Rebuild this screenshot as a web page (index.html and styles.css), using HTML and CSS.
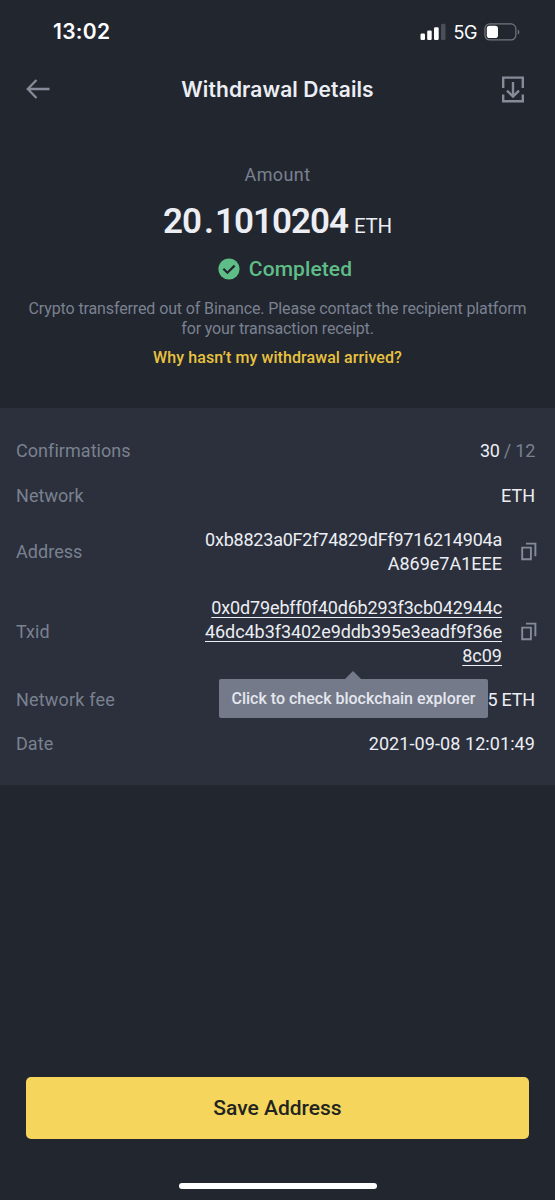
FILE: index.html
```html
<!DOCTYPE html>
<html lang="en">
<head>
<meta charset="utf-8">
<title>Withdrawal Details</title>
<link rel="stylesheet" href="styles.css">
</head>
<body>
<div class="screen">
  <div class="status-bar">
    <span class="time">13:02</span>
    <div class="status-icons">
      <svg class="signal" width="26" height="18" viewBox="0 0 26 18" fill="#fff">
        <rect x="0.5" y="10.5" width="4.5" height="6.5" rx="1.2"/>
        <rect x="7.2" y="7.5" width="4.5" height="9.5" rx="1.2"/>
        <rect x="14" y="4.2" width="4.7" height="12.8" rx="1.2"/>
        <rect x="21" y="0.8" width="4.5" height="16.2" rx="1.2" fill="#4b4f58"/>
      </svg>
      <span class="carrier">5G</span>
      <svg class="battery" width="36" height="18" viewBox="0 0 36 18">
        <rect x="0.9" y="0.9" width="31" height="16" rx="4.8" fill="none" stroke="#72767d" stroke-width="1.2"/>
        <rect x="2.8" y="2.8" width="11.2" height="12.2" rx="2.8" fill="#fff"/>
        <path d="M33.8 6.4c2 .8 2 4.4 0 5.2z" fill="#72767d"/>
      </svg>
    </div>
  </div>

  <header class="nav">
    <svg width="24" height="20" viewBox="0 0 24 20" fill="none" stroke="#858b98" stroke-width="2.3">
      <path d="M10.5 1 1.8 10l8.7 9M2 10h21.5"/>
    </svg>
    <h1 class="title">Withdrawal Details</h1>
    <svg width="22" height="27" viewBox="0 0 22 27" fill="none" stroke="#858b98" stroke-width="2.4">
      <path d="M1.2 12V1.6h19.6V12M1.2 18.5v6.7h19.6v-6.7M11 6v14.5M5 14.6l6 6 6-6"/>
    </svg>
  </header>

  <section class="summary">
    <div class="amount-label">Amount</div>
    <div class="amount"><span class="number">20<span class="dot">.</span>1010204</span><span class="unit">ETH</span></div>
    <div class="state">
      <svg width="22" height="22" viewBox="0 0 22 22">
        <circle cx="11" cy="11" r="10.6" fill="#5fbd88"/>
        <path d="M5.4 10.8l4 4 7.2-7.2" fill="none" stroke="#22262f" stroke-width="2.2"/>
      </svg>
      <span>Completed</span>
    </div>
    <p class="note">Crypto transferred out of Binance. Please contact the recipient platform<br>for your transaction receipt.</p>
    <a class="help">Why hasn’t my withdrawal arrived?</a>
  </section>

  <section class="details">
    <div class="row"><span class="label">Confirmations</span><span class="value confirmations"><span class="done">30</span><span class="total"> / 12</span></span></div>
    <div class="row"><span class="label">Network</span><span class="value">ETH</span></div>
    <div class="row">
      <span class="label">Address</span>
      <span class="value"><span class="address">0xb8823a0F2f74829dFf9716214904a</span><br>A869e7A1EEE</span>
      <svg class="copy" width="16" height="19" viewBox="0 0 16 19" fill="none" stroke="#858b98" stroke-width="1.9"><path d="M5 1.6h9.4v12.7M1.2 5.6h8.7v11.6H1.2z"/></svg>
    </div>
    <div class="row">
      <span class="label">Txid</span>
      <span class="value link"><span class="tx-start">0x0d79ebff0f40d6b293f3cb042944c</span><br><span class="tx-middle">46dc4b3f3402e9ddb395e3eadf9f36e</span><br>8c09</span>
      <svg class="copy" width="16" height="19" viewBox="0 0 16 19" fill="none" stroke="#858b98" stroke-width="1.9"><path d="M5 1.6h9.4v12.7M1.2 5.6h8.7v11.6H1.2z"/></svg>
      <div class="tooltip">Click to check blockchain explorer</div>
    </div>
    <div class="row"><span class="label fee">Network fee</span><span class="value fee-value">5 ETH</span></div>
    <div class="row"><span class="label">Date</span><span class="value date">2021-09-08 12:01:49</span></div>
  </section>

  <footer class="footer">
    <button class="save">Save Address</button>
    <div class="home-indicator"></div>
  </footer>
</div>
</body>
</html>
```

FILE: styles.css
```css
* { box-sizing: border-box; }
body { margin: 0; background: #22262f; }
.screen {
  width: 555px; height: 1200px; overflow: hidden;
  display: flex; flex-direction: column;
  background: #22262f; color: #eceef4;
  font-family: Roboto, "Liberation Sans", sans-serif;
  font-size: 18px;
}
svg { display: block; flex: none; }
.status-bar {
  height: 64px; padding: 0 35px 0 53px;
  display: flex; align-items: center; justify-content: space-between;
}
.time { padding-bottom: 1px; font: 600 21px Inter, sans-serif; color: #fff; letter-spacing: 0.3px; }
.status-icons { display: flex; align-items: center; gap: 7px; }
.carrier { font: 400 18px Inter, sans-serif; color: #fff; letter-spacing: -0.4px; }
.nav {
  height: 50px; padding: 0 31px 0 26px;
  display: flex; align-items: center; justify-content: space-between;
}
.title { margin: 0; padding-left: 3px; font: 600 21px Inter, sans-serif; color: #eceef4; letter-spacing: 0.1px; }
.summary {
  height: 294px; padding-top: 49px;
  display: flex; flex-direction: column; align-items: center;
}
.amount-label { line-height: 24px; color: #7a8190; letter-spacing: 0.4px; }
.amount { height: 60px; margin-top: 5px; display: flex; align-items: baseline; gap: 6px; line-height: 60px; }
.number { font-size: 35px; font-weight: 600; letter-spacing: -1px; }
.dot { margin: 0 2px 0 3px; }
.unit { font-size: 20.5px; letter-spacing: -0.2px; }
.state { height: 28px; margin: 3px 0 0 15px; display: flex; align-items: center; gap: 9px; color: #5fbd88; font-size: 21px; font-weight: 500; letter-spacing: 0.1px; }
.note { margin: 16px 0 0; text-align: center; font-size: 16px; line-height: 20px; color: #7a8190; white-space: nowrap; letter-spacing: -0.12px; }
.help { margin-top: 8px; line-height: 22px; font-size: 16px; font-weight: 500; color: #e9c23f; letter-spacing: 0.08px; }
.details { height: 377px; padding: 20.9px 20px 0 16px; background: #2b303c; }
.row { position: relative; display: flex; align-items: center; padding: 10.45px 0; line-height: 23.6px; }
.label { color: #7a8190; letter-spacing: 0.05px; }
.label.fee { letter-spacing: 0.2px; }
.value { margin-left: auto; text-align: right; white-space: pre; }
.confirmations { letter-spacing: -0.25px; }
.fee-value { letter-spacing: -0.2px; }
.total { color: #7a8190; }
.date { letter-spacing: 0.08px; }
.address { letter-spacing: -0.22px; }
.tx-start { letter-spacing: -0.14px; }
.tx-middle { letter-spacing: -0.06px; }
.link { text-decoration: underline; text-decoration-thickness: 1.3px; text-underline-offset: 3px; text-decoration-skip-ink: none; }
.copy { margin: 0 -2px 0 19px; }
.tooltip {
  position: absolute; z-index: 1; left: 203px; top: 93.6px;
  width: 269px; height: 39px; line-height: 40px;
  background: #747a89; border-radius: 2px;
  text-align: center; font-size: 16px; font-weight: 500; color: #e4e7ef; white-space: nowrap;
}
.tooltip::before {
  content: ""; position: absolute; left: 126px; top: -8px;
  border: solid transparent; border-width: 0 8px 8px; border-bottom-color: #747a89;
}
.footer { margin-top: auto; display: flex; flex-direction: column; align-items: center; padding: 0 26px 11px; }
.save { width: 503px; height: 62px; border: 0; border-radius: 5px; background: #f5d55b; color: #22241f; font: 500 21px Roboto, sans-serif; }
.home-indicator { width: 198px; height: 6px; margin-top: 44px; border-radius: 3px; background: #fff; }
```
